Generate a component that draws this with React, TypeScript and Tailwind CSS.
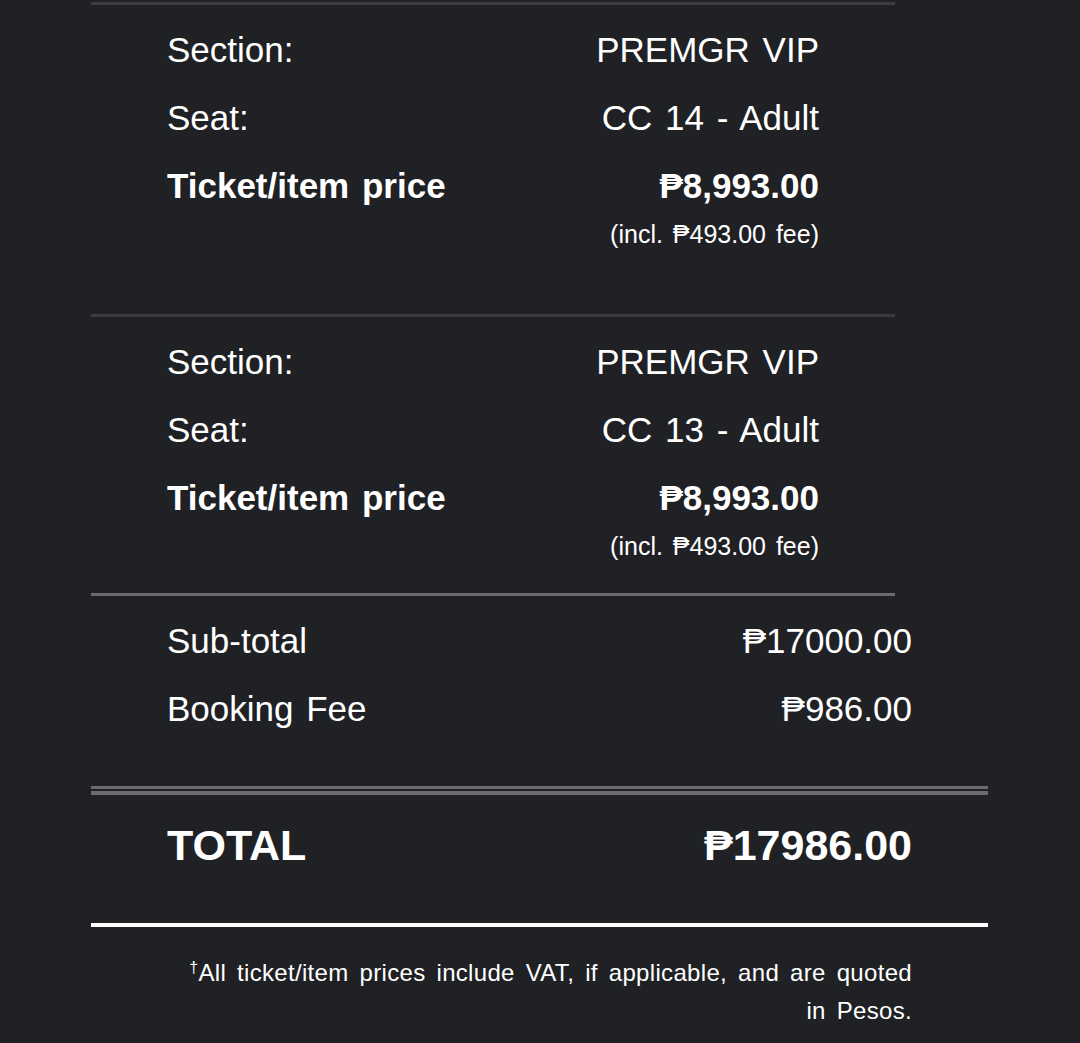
import React from 'react';

type Ticket = { section: string; seat: string; price: string; fee: string };

const tickets: Ticket[] = [
  { section: 'PREMGR VIP', seat: 'CC 14 - Adult', price: '₱8,993.00', fee: '₱493.00' },
  { section: 'PREMGR VIP', seat: 'CC 13 - Adult', price: '₱8,993.00', fee: '₱493.00' },
];

function Row({ label, value, bold }: { label: string; value: string; bold?: boolean }) {
  return (
    <div className={`flex h-[68px] items-center justify-between ${bold ? 'font-bold' : ''}`}>
      <span>{label}</span>
      <span>{value}</span>
    </div>
  );
}

function TicketBlock({ ticket, last }: { ticket: Ticket; last: boolean }) {
  return (
    <section
      className={`w-[804px] border-t-[3px] px-[76px] pt-[11px] ${
        last ? 'border-[#3a3b3f] pb-[33px]' : 'border-[#3c3d41] pb-[66px]'
      }`}
    >
      <Row label="Section:" value={ticket.section} />
      <Row label="Seat:" value={ticket.seat} />
      <Row label="Ticket/item price" value={ticket.price} bold />
      <div className="text-right text-[25px] leading-[28px]">(incl. {ticket.fee} fee)</div>
    </section>
  );
}

export default function App() {
  return (
    <div
      className="min-h-[1043px] bg-[#202125] pl-[91px] pt-[2px] text-[35px] text-white [word-spacing:3px]"
      style={{ fontFamily: '"Liberation Sans", Arial, "DejaVu Sans", sans-serif' }}
    >
      {tickets.map((t, i) => (
        <TicketBlock key={t.seat} ticket={t} last={i === tickets.length - 1} />
      ))}

      <section className="w-[897px]">
        <div className="w-[804px] border-t-[3px] border-[#6a6b6f]" />
        <div className="px-[76px] pt-[11px] pb-[43px]">
          <Row label="Sub-total" value="₱17000.00" />
          <Row label="Booking Fee" value="₱986.00" />
        </div>
        <div className="h-[3px] bg-[#6b6c70]" />
        <div className="h-[2px]" />
        <div className="h-[4px] bg-[#6b6c70]" />
        <div className="flex items-center justify-between px-[76px] pt-[25px] pb-[53px] text-[43px] font-bold leading-[50px]">
          <span>TOTAL</span>
          <span>₱17986.00</span>
        </div>
        <div className="h-[4px] bg-white" />
        <p className="px-[76px] pt-[27px] text-right text-[24px] leading-[38px] tracking-[0.32px] [word-spacing:4px]">
          <sup className="text-[16px]">†</sup>All ticket/item prices include VAT, if applicable, and are quoted
          <br />
          in Pesos.
        </p>
      </section>
    </div>
  );
}
